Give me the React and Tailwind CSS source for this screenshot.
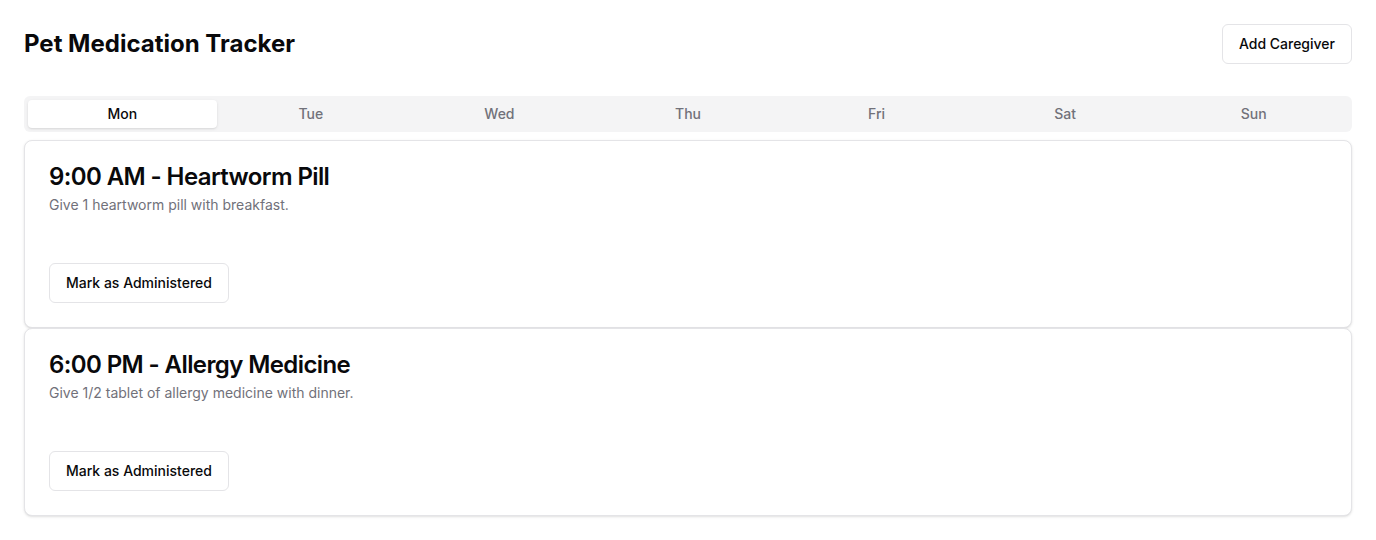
import React, { useState } from 'react';

const days = ['Mon', 'Tue', 'Wed', 'Thu', 'Fri', 'Sat', 'Sun'];

const schedule = [
  { time: '9:00 AM', name: 'Heartworm Pill', note: 'Give 1 heartworm pill with breakfast.' },
  { time: '6:00 PM', name: 'Allergy Medicine', note: 'Give 1/2 tablet of allergy medicine with dinner.' },
];

const App = () => {
  const [day, setDay] = useState('Mon');

  return (
    <div className="p-6 text-[#09090b] bg-white min-h-[540px]" style={{ fontFamily: 'Inter, "Noto Sans", sans-serif' }}>
      {/* Header */}
      <div className="flex items-center justify-between mb-8">
        <h1 className="text-2xl font-bold">Pet Medication Tracker</h1>
        <button className="h-10 px-4 border border-[#e4e4e7] rounded-md bg-white text-sm font-medium">
          Add Caregiver
        </button>
      </div>

      {/* Day tabs */}
      <div className="grid grid-cols-7 h-9 p-1 rounded-md bg-[#f4f4f5] text-[#71717a]">
        {days.map((d) => (
          <button
            key={d}
            onClick={() => setDay(d)}
            className={
              d === day
                ? 'rounded-sm bg-white text-[#09090b] text-sm font-medium shadow-sm'
                : 'rounded-sm text-sm font-medium'
            }
          >
            {d}
          </button>
        ))}
      </div>

      {/* Medication cards */}
      <div className="mt-2">
        {schedule.map((item, index) => (
          <div key={index} className="rounded-lg border border-[#e4e4e7] bg-white shadow-sm">
            <div className="p-6 flex flex-col gap-1.5">
              <h3 className="text-2xl font-semibold leading-none tracking-tight">
                {item.time} - {item.name}
              </h3>
              <p className="text-sm text-[#71717a]">{item.note}</p>
            </div>
            <div className="p-6 pt-0"></div>
            <div className="p-6 pt-0 flex items-center">
              <button className="h-10 px-4 border border-[#e4e4e7] rounded-md bg-white text-sm font-medium">
                Mark as Administered
              </button>
            </div>
          </div>
        ))}
      </div>
    </div>
  );
};

export default App;
